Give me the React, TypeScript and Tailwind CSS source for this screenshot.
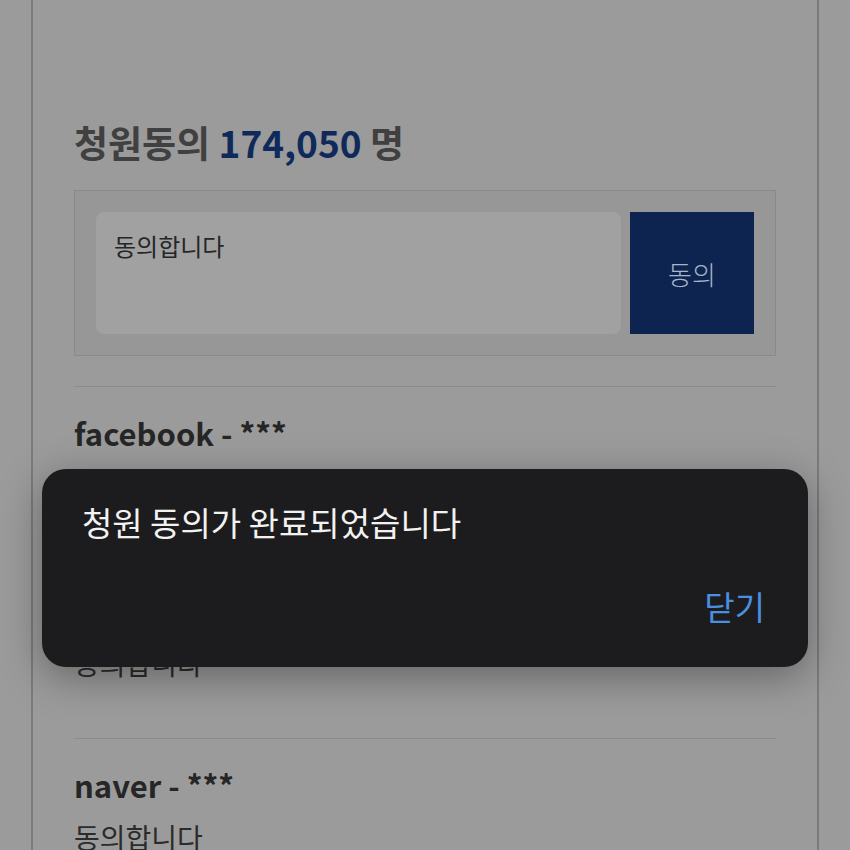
import React from "react"

const ko = { fontFamily: '"Noto Sans CJK KR", "Noto Sans", sans-serif' }

const Comment = ({ name, text, gap }: { name: string; text: string; gap: string }) => (
  <div className="flex flex-col border-t border-[#8b8b8b] pt-[22px]">
    <p className="text-[31px] font-bold leading-[48px] text-[#262626]">{name}</p>
    <p className={`text-[28px] leading-[40px] text-[#2b2b2b] ${gap}`}>{text}</p>
  </div>
)

export default function App() {
  return (
    <div className="relative h-[850px] w-[850px] overflow-hidden bg-[#9b9b9b]" style={ko}>
      <div className="mx-[31px] flex h-full flex-col border-x-2 border-[#7b7b7b] px-[41px] pt-[116px]">
        <h2 className="text-[37px] font-bold leading-[52px] text-[#404040]">
          청원동의 <span className="text-[#0f2a5a]">174,050</span> 명
        </h2>

        <div className="mt-[22px] flex gap-[9px] border border-[#8a8a8a] bg-[#979797] p-[21px]">
          <div className="h-[122px] flex-1 rounded-lg bg-[#a1a1a1] px-[18px] pt-[15px] text-[24px] leading-[38px] text-[#262626]">
            동의합니다
          </div>
          <button className="flex h-[122px] w-[124px] items-center justify-center bg-[#0d2450] text-[26px] font-light text-[#a9b5c9]">
            동의
          </button>
        </div>

        <div className="mt-[30px] flex flex-col">
          <Comment name="facebook - ***" text="동의합니다" gap="mt-[186px] mb-[55px]" />
          <Comment name="naver - ***" text="동의합니다" gap="mt-[8px]" />
        </div>
      </div>

      <div className="absolute left-[42px] top-[469px] flex h-[198px] w-[766px] flex-col justify-between rounded-[24px] bg-[#1c1c1e] px-[40px] pb-[38px] pt-[30px] shadow-[0_10px_40px_rgba(0,0,0,0.35)]">
        <p className="text-[33px] leading-[46px] text-[#f2f2f2]">청원 동의가 완료되었습니다</p>
        <button className="self-end pr-[3px] text-[33px] leading-[46px] text-[#4a8fe0]">닫기</button>
      </div>
    </div>
  )
}
